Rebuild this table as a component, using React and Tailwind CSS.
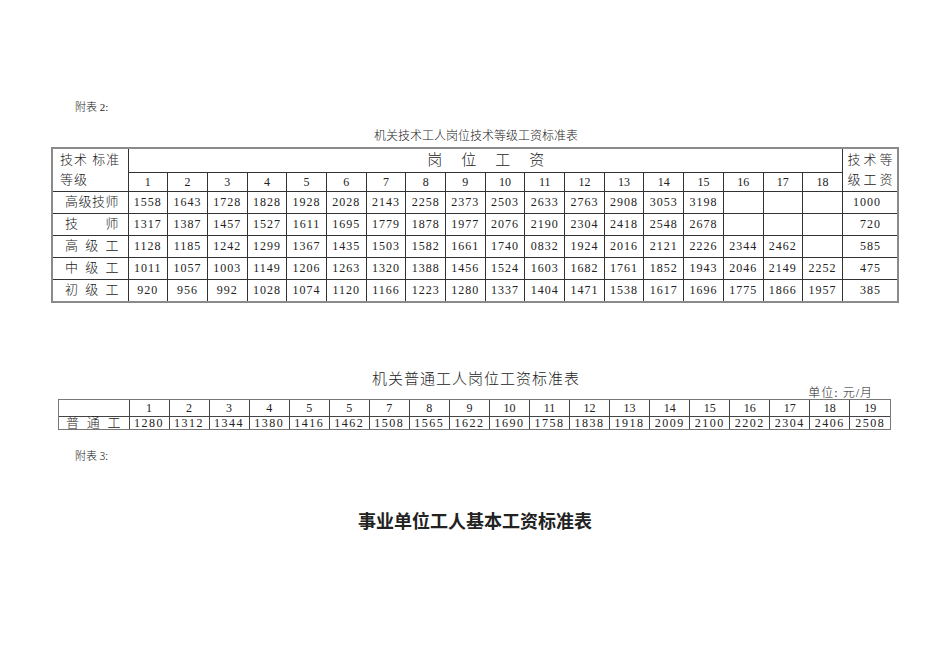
import React from 'react'

const serif = { fontFamily: '"Liberation Serif", "Noto Sans CJK SC", serif' }

const rows1 = [
  { label: ['高', '级', '技', '师'], vals: ['1558', '1643', '1728', '1828', '1928', '2028', '2143', '2258', '2373', '2503', '2633', '2763', '2908', '3053', '3198', '', '', ''], grade: '1000' },
  { label: ['技', '师'], vals: ['1317', '1387', '1457', '1527', '1611', '1695', '1779', '1878', '1977', '2076', '2190', '2304', '2418', '2548', '2678', '', '', ''], grade: '720' },
  { label: ['高', '级', '工'], vals: ['1128', '1185', '1242', '1299', '1367', '1435', '1503', '1582', '1661', '1740', '0832', '1924', '2016', '2121', '2226', '2344', '2462', ''], grade: '585' },
  { label: ['中', '级', '工'], vals: ['1011', '1057', '1003', '1149', '1206', '1263', '1320', '1388', '1456', '1524', '1603', '1682', '1761', '1852', '1943', '2046', '2149', '2252'], grade: '475' },
  { label: ['初', '级', '工'], vals: ['920', '956', '992', '1028', '1074', '1120', '1166', '1223', '1280', '1337', '1404', '1471', '1538', '1617', '1696', '1775', '1866', '1957'], grade: '385' },
]

const heads2 = ['1', '2', '3', '4', '5', '5', '7', '8', '9', '10', '11', '12', '13', '14', '15', '16', '17', '18', '19']
const vals2 = ['1280', '1312', '1344', '1380', '1416', '1462', '1508', '1565', '1622', '1690', '1758', '1838', '1918', '2009', '2100', '2202', '2304', '2406', '2508']

function Label({ chars, pad = 'pl-[12px] pr-[9px] leading-[18px]' }) {
  return (
    <div className={`flex justify-between text-[13px] font-light text-[#222] ${pad}`}>
      {chars.map((c, i) => <span key={i}>{c}</span>)}
    </div>
  )
}

export default function App() {
  return (
    <div className="w-[950px] h-[672px] bg-white text-[#222] overflow-hidden" style={serif}>
      <div className="pt-[100px] pl-[75px] text-[11px] leading-[14px] font-light">附表 2:</div>

      <div className="mt-[15px] text-center text-[12px] leading-[14px] pl-[2px] font-light">机关技术工人岗位技术等级工资标准表</div>

      <div className="ml-[51px] mt-[4px] w-[848px] border-2 border-[#8a8a8a]">
        <table className="w-full table-fixed border-collapse">
          <colgroup>
            <col className="w-[75px]" />
            {Array.from({ length: 18 }).map((_, i) => <col key={i} className="w-[39.7px]" />)}
            <col />
          </colgroup>
          <tbody>
            <tr className="h-[23px]">
              <td rowSpan={2} className="border-r border-b border-[#333] align-top px-[7px] pt-[1px] text-[13px] leading-[20px] font-light">
                <div className="tracking-[1px]">技术 标准</div>
                <div className="tracking-[1px]">等级</div>
              </td>
              <td colSpan={18} className="border-r border-b border-[#333] text-center text-[15px] leading-[20px] font-light">
                <span className="tracking-[19px] pl-[20px]">岗位工资</span>
              </td>
              <td rowSpan={2} className="border-b border-[#333] align-top text-center pt-[1px] text-[13px] leading-[20px] font-light">
                <div className="tracking-[3px] pl-[3px]">技术等</div>
                <div className="tracking-[3px] pl-[3px]">级工资</div>
              </td>
            </tr>
            <tr className="h-[19px]">
              {Array.from({ length: 18 }).map((_, i) => (
                <td key={i} className="border-r border-b border-[#333] text-center text-[12px] leading-[18px]">{i + 1}</td>
              ))}
            </tr>
            {rows1.map((r, ri) => (
              <tr key={ri} className="h-[22px]">
                <td className={`border-r border-[#333] ${ri < rows1.length - 1 ? 'border-b' : ''}`}>
                  <Label chars={r.label} />
                </td>
                {r.vals.map((v, i) => (
                  <td key={i} className={`border-r border-[#333] text-center text-[12px] leading-[18px] tracking-[1px] ${ri < rows1.length - 1 ? 'border-b' : ''}`}>{v}</td>
                ))}
                <td className={`border-[#333] text-right pr-[16px] text-[12px] leading-[18px] tracking-[1px] ${ri < rows1.length - 1 ? 'border-b' : ''}`}>{r.grade}</td>
              </tr>
            ))}
          </tbody>
        </table>
      </div>

      <div className="mt-[67px] text-center text-[15px] leading-[18px] tracking-[1px] pl-[2px] font-light">机关普通工人岗位工资标准表</div>
      <div className="flex justify-end pr-[77px] text-[12px] leading-[11px] tracking-[1px] font-light">单位: 元/月</div>

      <div className="ml-[58px] w-[833px] border border-[#777]">
        <table className="w-full table-fixed border-collapse">
          <colgroup>
            <col className="w-[70px]" />
            {heads2.map((_, i) => <col key={i} />)}
          </colgroup>
          <tbody>
            <tr className="h-[16px]">
              <td className="border-r border-b border-[#444]"></td>
              {heads2.map((h, i) => (
                <td key={i} className={`border-b border-[#444] text-center text-[12px] leading-[14px] ${i < heads2.length - 1 ? 'border-r' : ''}`}>{h}</td>
              ))}
            </tr>
            <tr className="h-[13px]">
              <td className="border-r border-[#444]">
                <Label chars={['普', '通', '工']} pad="pl-[7px] pr-[8px] leading-[12px]" />
              </td>
              {vals2.map((v, i) => (
                <td key={i} className={`border-[#444] text-center text-[12px] leading-[12px] tracking-[1.5px] ${i < vals2.length - 1 ? 'border-r' : ''}`}>{v}</td>
              ))}
            </tr>
          </tbody>
        </table>
      </div>

      <div className="mt-[18px] pl-[75px] text-[11px] leading-[14px] font-light" style={{ fontFamily: '"Noto Sans CJK SC", sans-serif' }}>附表 3:</div>

      <div className="mt-[46px] text-center text-[18px] leading-[24px] font-bold" style={{ fontFamily: '"Noto Sans CJK SC", sans-serif' }}>事业单位工人基本工资标准表</div>
    </div>
  )
}
